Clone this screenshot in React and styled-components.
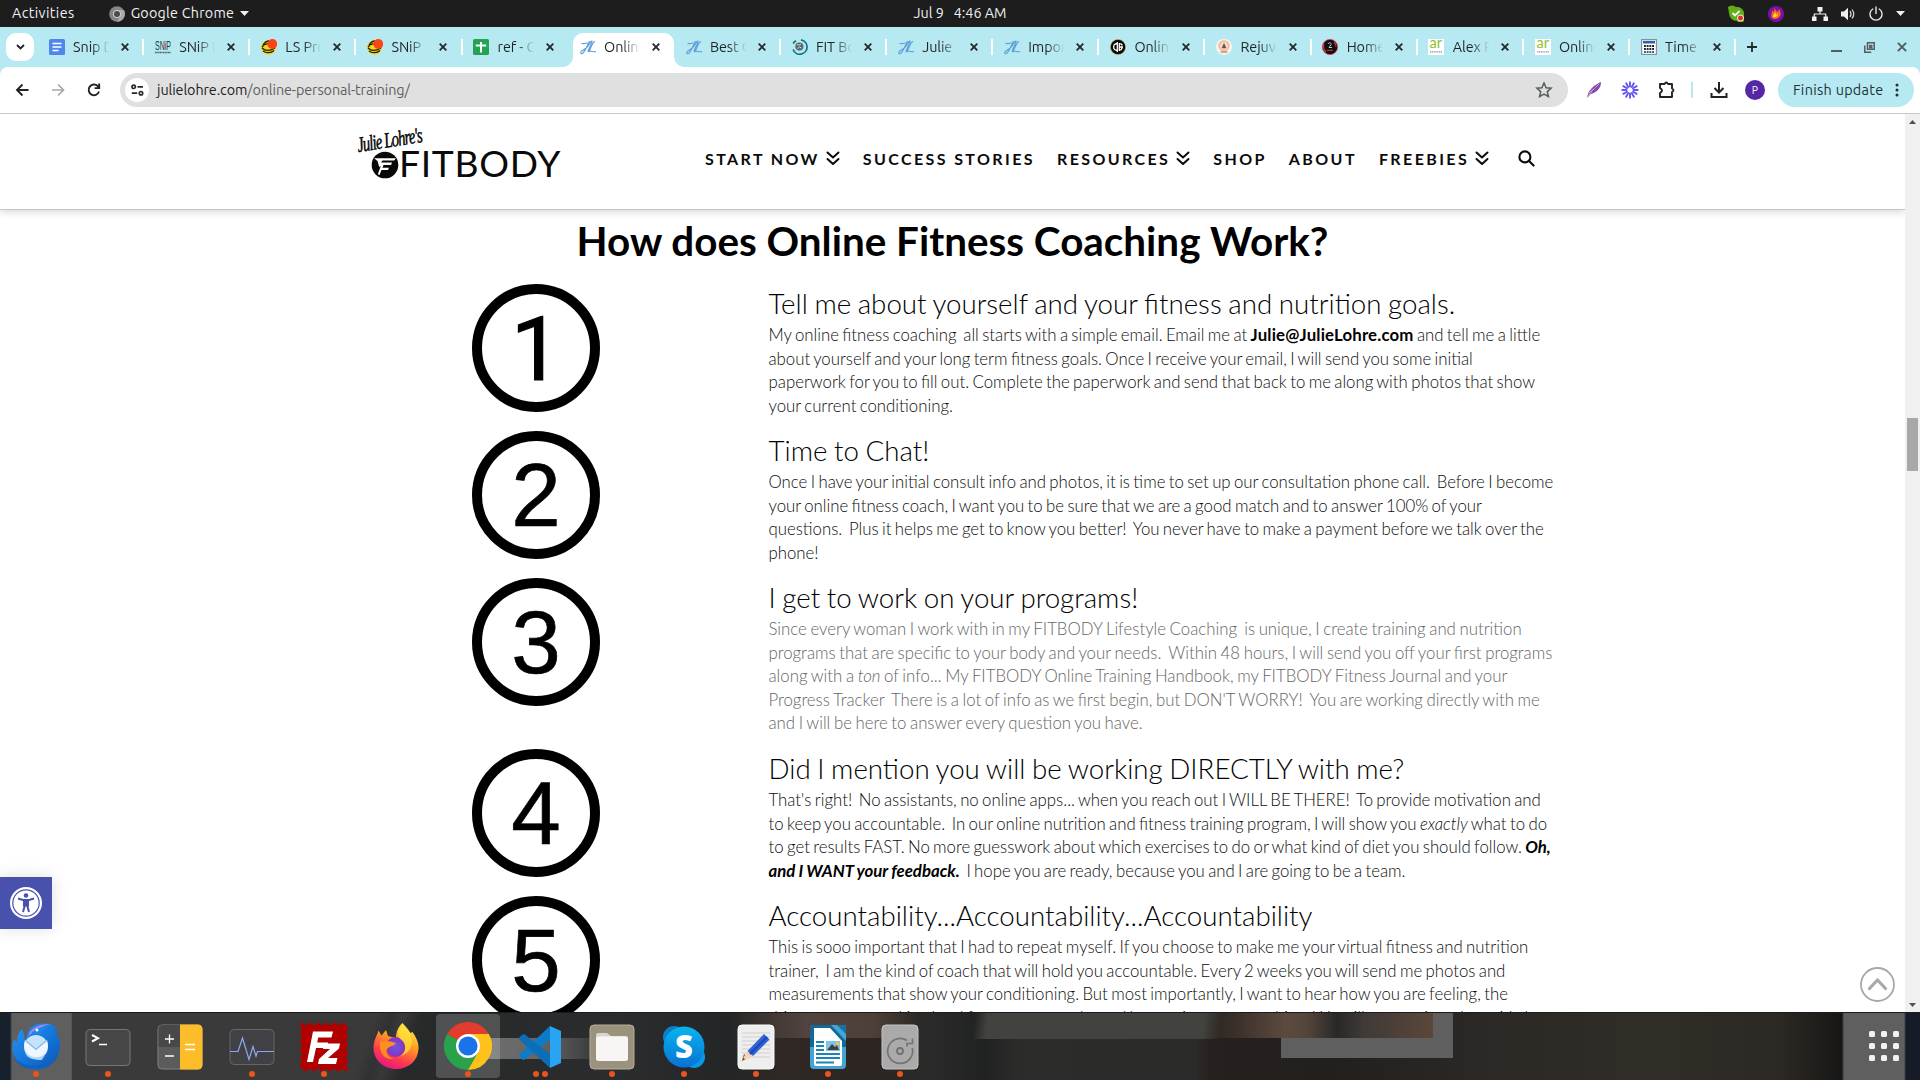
import React from "react";
import styled, { createGlobalStyle } from "styled-components";

const GlobalStyle = createGlobalStyle`
  * { box-sizing: border-box; }
  body { margin: 0; background: #fff; overflow: hidden; }
  svg { display: block; flex: none; }
`;

const uiFont = `Ubuntu, "Noto Sans", "Open Sans", sans-serif`;

const Screen = styled.div`
  width: 1920px;
  height: 1080px;
  display: flex;
  flex-direction: column;
  overflow: hidden;
  font-family: ${uiFont};
`;

/* ---------- system bar ---------- */
const SystemBar = styled.div`
  height: 27px;
  flex: none;
  background: #1d1d1d;
  color: #f0f0f0;
  display: grid;
  grid-template-columns: 1fr auto 1fr;
  align-items: center;
  font-size: 14.3px;
  line-height: 27px;
  white-space: pre;
`;
const BarText = styled.span`
  letter-spacing: ${(p) => p.$spacing}px;
`;
const BarLeft = styled.div`
  display: flex;
  align-items: center;
  padding-left: 12px;
`;
const AppMenu = styled.div`
  display: flex;
  align-items: center;
  gap: 6px;
  margin-left: 34px;
`;
const BarRight = styled.div`
  display: flex;
  align-items: center;
  justify-content: flex-end;
  padding-right: 15px;
`;
const TrayIcon = styled.div`
  margin-left: ${(p) => p.$gap}px;
`;

/* ---------- tab strip ---------- */
const TabStrip = styled.div`
  height: 40px;
  flex: none;
  background: #b6e9f1;
  display: flex;
  padding: 6px 0 0 6px;
`;
const TabSearch = styled.div`
  width: 28px;
  height: 28px;
  margin-right: 4px;
  border-radius: 10px;
  background: #fff;
  display: grid;
  place-items: center;
`;
const Tab = styled.div`
  width: ${(p) => (p.$active ? 101 : 106.14)}px;
  height: 34px;
  flex: none;
  position: relative;
  display: flex;
  align-items: center;
  margin: ${(p) => (p.$active ? "0 1px 0 4.2px" : 0)};
  padding: 0 0 6px ${(p) => (p.$active ? 7 : 10.8)}px;
  color: #1f2526;
  background: ${(p) => (p.$active ? "#fff" : "transparent")};
  border-radius: 10px 10px 0 0;
  &::before, &::after {
    content: "";
    display: ${(p) => (p.$active ? "block" : "none")};
    position: absolute;
    bottom: 0;
    width: 10px;
    height: 10px;
  }
  &::before { left: -10px; background: radial-gradient(circle at 0 0, transparent 9.5px, #fff 10px); }
  &::after { right: -10px; background: radial-gradient(circle at 100% 0, transparent 9.5px, #fff 10px); }
`;
const TabTitle = styled.div`
  width: 37px;
  margin-left: 8.3px;
  margin-right: 11px;
  overflow: hidden;
  white-space: pre;
  font-size: 14.4px;
  line-height: 22px;
  letter-spacing: -0.1px;
  -webkit-mask-image: linear-gradient(90deg, #000 50%, transparent 98%);
`;
const TabDivider = styled.div`
  width: 2px;
  height: 16px;
  margin-left: auto;
  background: ${(p) => (p.$hidden ? "transparent" : "#fff")};
`;
const NewTab = styled.div`
  padding: 8px 0 0 10px;
`;
const WindowButtons = styled.div`
  display: flex;
  height: 28px;
  align-items: center;
  gap: 22px;
  margin-left: auto;
  padding-right: 13px;
`;

/* ---------- toolbar ---------- */
const ToolbarShell = styled.div`
  height: 47px;
  flex: none;
  background: #b6e9f1;
`;
const Toolbar = styled.div`
  height: 47px;
  background: #fff;
  border-radius: 8px 8px 0 0;
  border-bottom: 1px solid #c6c9ca;
  display: flex;
  align-items: center;
  padding: 0 6px 0 13px;
`;
const NavIcons = styled.div`
  display: flex;
  gap: 18px;
  margin-right: 17px;
`;
const Omnibox = styled.div`
  width: 1448px;
  height: 34px;
  border-radius: 17px;
  background: #e0e0e0;
  display: flex;
  align-items: center;
  padding: 0 15px 0 5px;
  font-size: 14.4px;
  letter-spacing: -0.1px;
  color: #5d6061;
  b { font-weight: 400; color: #1f2122; }
`;
const SiteInfo = styled.div`
  width: 24px;
  height: 24px;
  border-radius: 50%;
  background: #fff;
  display: grid;
  place-items: center;
  margin-right: 8px;
`;
const StarSlot = styled.div`margin-left: auto;`;
const Extensions = styled.div`
  display: flex;
  align-items: center;
  gap: 18px;
  margin-left: 17px;
`;
const ToolbarDivider = styled.div`
  width: 2px;
  height: 16px;
  background: #b6e9f1;
  margin: 0 -1px 0 -2px;
`;
const Avatar = styled.div`
  width: 20px;
  height: 20px;
  border-radius: 50%;
  background: #5627a5;
  color: #fff;
  font-size: 10.5px;
  line-height: 20px;
  text-align: center;
  margin-left: -1px;
`;
const UpdateButton = styled.div`
  width: 136px;
  height: 34px;
  border-radius: 17px;
  margin-left: auto;
  background: #b6e9f1;
  color: #1c3438;
  display: flex;
  align-items: center;
  justify-content: space-between;
  padding: 0 15px;
  font-size: 14.4px;
  letter-spacing: 0.3px;
  white-space: nowrap;
`;

/* ---------- page ---------- */
const Viewport = styled.div`
  height: 898px;
  flex: none;
  display: flex;
  overflow: hidden;
  background: #fff;
  position: relative;
`;
const Page = styled.div`
  flex: 1;
  font-family: Lato, sans-serif;
  overflow: hidden;
`;
const Header = styled.header`
  height: 96px;
  border-bottom: 1px solid #c4c6c6;
  box-shadow: 0 2px 8px rgba(0, 0, 0, 0.16);
  display: flex;
  padding: 14px 0 0 357px;
`;
const Logo = styled.div`
  width: 205px;
  height: 54px;
  position: relative;
`;
const LogoScript = styled.span`
  position: absolute;
  left: 0;
  top: 6px;
  font: italic 400 18px/22px "Liberation Serif", serif;
  letter-spacing: -1px;
  -webkit-text-stroke: 0.4px #000;
  transform-origin: 0 50%;
  transform: rotate(-9deg) scale(0.82, 1.2);
  white-space: nowrap;
`;
const LogoMark = styled.div`
  position: absolute;
  left: 14px;
  top: 23px;
`;
const LogoWord = styled.span`
  position: absolute;
  left: 42px;
  top: 11px;
  font: 400 37.2px/48px Lato, sans-serif;
  letter-spacing: 0.7px;
  color: #0a0a0a;
  white-space: nowrap;
`;
const Nav = styled.nav`
  height: 38px;
  display: flex;
  align-items: center;
  gap: 22px;
  margin: 11px 0 0 143px;
  font-size: 16px;
  font-weight: 700;
  letter-spacing: 2.4px;
  color: #0b0b0b;
  white-space: nowrap;
`;
const NavItem = styled.a`
  display: flex;
  align-items: center;
  gap: 6px;
  margin-right: ${(p) => (p.$menu ? 1 : 0)}px;
`;
const SearchSlot = styled.div`margin-left: 6px;`;
const Title = styled.h2`
  margin: 6px 0 0;
  text-align: center;
  font-size: 40.4px;
  line-height: 50px;
  font-weight: 700;
  color: #000;
`;
const Steps = styled.div`
  padding: 18px 0 0 357px;
  display: flex;
  flex-direction: column;
  gap: 19px;
`;
const Step = styled.section`
  height: ${(p) => 128 + (p.$extra || 0)}px;
  display: grid;
  grid-template-columns: 358px 800px;
  column-gap: 53.5px;
`;
const Number = styled.div`
  width: 128px;
  height: 128px;
  justify-self: center;
  border: 10px solid #000;
  border-radius: 50%;
  padding-top: ${(p) => (p.$footless ? 2 : 0)}px;
  font: 89px/108px ${(p) => (p.$footless ? "Roboto" : `"Liberation Sans"`)}, Arial, sans-serif;
  color: #000;
  -webkit-text-stroke: ${(p) => (p.$footless ? 1.2 : 0.7)}px #000;
  text-align: center;
`;
const StepTitle = styled.h3`
  margin: 2px 0 0;
  font-size: 27.7px;
  line-height: 36px;
  font-weight: 300;
  color: #000;
  white-space: nowrap;
  word-spacing: -0.9px;
`;
const StepText = styled.p`
  margin: 1px 0 0;
  font-size: 16.8px;
  line-height: 23.6px;
  font-weight: 300;
  word-spacing: ${(p) => (p.$muted ? -0.95 : -1.2)}px;
  white-space: pre;
  color: ${(p) => (p.$muted ? "#666" : "#0d0d0d")};
  b { font-weight: 700; color: #000; letter-spacing: 0.17px; }
  b i { letter-spacing: 0; word-spacing: -0.5px; }
`;
const Scrollbar = styled.div`
  width: 15px;
  background: #f0f0f0;
  display: flex;
  flex-direction: column;
  align-items: center;
  justify-content: space-between;
  padding: 6px 0 5px;
`;
const Thumb = styled.div`
  width: 11px;
  height: 53px;
  background: #a8a8a8;
  margin: 0 0 238px;
`;
const Accessibility = styled.div`
  position: absolute;
  left: 0;
  top: 763px;
  width: 52px;
  height: 52px;
  background: #4852ad;
  box-shadow: 0 0 16px rgba(0, 0, 0, 0.12);
  display: grid;
  place-items: center;
`;
const BackToTop = styled.div`
  position: absolute;
  left: 1860px;
  top: 853px;
`;

/* ---------- dock ---------- */
const Dock = styled.div`
  height: 68px;
  flex: none;
  display: flex;
  align-items: stretch;
  border-top: 1px solid #1b1b1b;
  overflow: hidden;
  background:
    linear-gradient(#5f5f5f, #5f5f5f) 1281px 25px / 172px 20px no-repeat,
    linear-gradient(#5f5f5f, #5f5f5f) 1433px 0 / 20px 45px no-repeat,
    linear-gradient(90deg, rgba(92,74,62,0), #5c4a3e 35%, #54453b 45%, #292827 58%, #403a38 70%, #5a4739) 1205px 0 / 228px 25px no-repeat,
    linear-gradient(97deg, rgba(66,67,62,0) 4%, #42433e 9%, #42433e 93%, rgba(66,67,62,0)) 965px 0 / 255px 26px no-repeat,
    linear-gradient(90deg, rgba(85,70,62,0), #51443f 40%, #4d4038 75%, rgba(80,66,58,0)) 730px 0 / 190px 25px no-repeat,
    linear-gradient(90deg, #707070 0, #666 50%, rgba(90,90,90,0)) 464px 25px / 150px 21px no-repeat,
    linear-gradient(110deg, #3a3a3a 78%, #303132 82%, #383838 85%, #27292a 90%) 72px 0 / 366px 68px no-repeat,
    linear-gradient(90deg, #17212b 10px, #5f5f5f 12px, #5f5f5f 71px, #3a3a3a 73px, #27292a 438px, #2b2c2d 620px, #232526 730px, #2f2825 780px, #2c2522 870px, #2a2a29 930px, #202222 985px, #2c2c2a 1020px, #2b2b2a 1195px, #26211e 1210px, #231f1c 1330px, #2c2926 1500px, #312d27 1650px, #2c2924 1780px, #181615 1842px, #5f5f5f 1844px, #5f5f5f 1904px, #161b29 1906px);
`;
const DockItem = styled.div`
  width: 72px;
  display: flex;
  flex-direction: column;
  align-items: center;
  padding-top: 1px;
`;
const DockTile = styled.div`
  width: 64px;
  height: 58px;
  margin-bottom: -1px;
  display: grid;
  place-items: center;
  padding-top: 7px;
  border-radius: 4px;
`;
const DockHighlight = styled(DockTile)`
  height: 64px;
  margin-bottom: -7px;
  padding: 0;
  background: rgba(255, 255, 255, 0.19);
`;
const Dots = styled.div`
  display: flex;
  gap: 3px;
  i { width: 6px; height: 6px; border-radius: 50%; background: #e95420; }
`;
const AppsGrid = styled.div`
  margin: 17px 20px 0 auto;
`;

/* ---------- favicons ---------- */
const Fav = ({ type }) => {
  const p = { width: 16, height: 16, viewBox: "0 0 16 16", fill: "none" };
  switch (type) {
    case "doc":
      return <svg {...p}><rect width="16" height="16" rx="1.6" fill="#4f86ec" /><path d="M3.5 4.5h9M3.5 8h9M3.5 11.5h6" stroke="#fff" strokeWidth="1.6" /></svg>;
    case "snip":
      return (
        <svg {...p}>
          <text x="0" y="10.5" fontFamily="Liberation Sans" fontWeight="400" fontSize="13.5" textLength="16" lengthAdjust="spacingAndGlyphs" fill="#26383b">SNiP</text>
          <path d="M10 3v7" stroke="#e4645a" strokeWidth=".9" /><path d="M0 13.5h16" stroke="#4b6366" strokeWidth="1.6" strokeDasharray="1.2 .4" />
        </svg>
      );
    case "burger":
      return <svg {...p}><circle cx="7.5" cy="8.6" r="7.4" fill="#f4d51e" /><path d="M1 8c3-4 7-4 8-1M1 9c3 3 8 3 13 0M2 12c3 2.3 8 2.3 11-.5M2 6c2-3 4-4 6-4" stroke="#22220f" strokeWidth="1.3" /><circle cx="11.3" cy="5" r="4.9" fill="#fa4616" /></svg>;
    case "sheet":
      return <svg {...p}><rect width="16" height="16" rx="1.6" fill="#23a455" /><path d="M2.8 6.5h10.4M8 3v10.6" stroke="#fff" strokeWidth="2" /></svg>;
    case "jl":
      return <svg {...p}><path d="M1.500 4.500c2 .4 4 0 6-.8M9.500 2C7.500 6 5 13 2.500 14.500.3 15.500 0 12.800 3 11.300c3-1.500 5-3.500 7-7.300 1-2 2.800-2.800 1.800-.5L7.800 12.500M15 2.300C12.500 3.500 11 8.500 9 12.600c2.500-1.200 4 .7 7 0" stroke="#5d9fd8" strokeWidth="1.1" /></svg>;
    case "fit":
      return <svg {...p}><path d="M9 .9a7.2 7.2 0 1 1-7.900 9.600M1.200 4.500A7 7 0 0 1 4 1.700" stroke="#087481" strokeWidth="1.700" /><circle cx="7.400" cy="7.600" r="4.100" fill="#5c6a6e" /><path d="M5 6c2-1 2 1 4-1M5.500 9.500l2-1.500 2 1" stroke="#cdd7da" /></svg>;
    case "df":
      return <svg {...p}><circle cx="8" cy="8" r="7.600" fill="#080808" stroke="#c9b44b" strokeWidth=".6" /><path d="M7.300 3v10M6.800 4.800C2.600 4.300 2.600 11.700 6.800 11.200M9.300 4v8M9 4.700c2 0 3 .8 3.200 1.800M9 8h4M9 11.300c2 0 3-1 3.200-3" stroke="#fff" strokeWidth="1.300" /></svg>;
    case "reju":
      return <svg {...p}><circle cx="8" cy="8" r="8" fill="#f7f4ef" /><circle cx="8" cy="6.800" r="4.800" fill="#fbd9bf" stroke="#f5b58c" strokeWidth="1.700" /><path d="M6 9l2-4.600L10 9z" fill="#55565a" stroke="#55565a" strokeWidth=".5" /><path d="M4.500 13h7" stroke="#b99a82" strokeWidth="1.500" /></svg>;
    case "home":
      return <svg {...p}><circle cx="8" cy="8" r="7.600" fill="#101014" stroke="#d8384b" strokeWidth=".8" /><path d="M6 5c1.500-2.500 4-1 2.800 1L7 8.500h3" stroke="#c2c5ca" strokeWidth="1" /><path d="M5 11.300h6" stroke="#d8384b" strokeWidth="1" /><path d="M2 5c-1 3 0 6 2 8M12 3c2 2 2 3 2 5" stroke="#d8384b" strokeWidth="1.100" /></svg>;
    case "ar":
      return <svg {...p}><rect width="16" height="16" fill="#fff" /><text x="1.500" y="9.400" fontFamily="Lato" fontSize="14.500" fontWeight="400" fill="#8ebf32">ar</text><path d="M2 12.800h12" stroke="#999" strokeWidth="1.300" strokeDasharray="1.300 .5" /></svg>;
    default:
      return <svg {...p}><rect x=".6" y=".6" width="14.800" height="14.800" fill="#fff" stroke="#8a9095" strokeWidth="1.200" /><path d="M2 3.200h12" stroke="#2c62a8" strokeWidth="2.600" /><path d="M3 7h10M3 10h10" stroke="#222" strokeWidth="1.900" strokeDasharray="1.900 .8" /><path d="M3 13h10" stroke="#2c62a8" strokeWidth="1.900" strokeDasharray="1.900 .8" /></svg>;
  }
};

const Cross = ({ size = 8, color = "#242829", w = 1.8 }) => (
  <svg width={size} height={size} viewBox="0 0 8 8"><path d="M.7.7l6.6 6.6M7.3.7L.7 7.3" stroke={color} strokeWidth={w} /></svg>
);

const tabs = [
  ["doc", "Snip D"], ["snip", "SNiP L"], ["burger", "LS Pro"], ["burger", "SNiP  "], ["sheet", "ref - G"],
  ["jl", "Online"], ["jl", "Best O"], ["fit", "FIT Bo"], ["jl", "Julie  "], ["jl", "Impor"],
  ["df", "Online"], ["reju", "Rejuve"], ["home", "Home"], ["ar", "Alex R"], ["ar", "Online"], ["calc", "Time  "],
];
const ACTIVE = 5;

const Chevrons = () => (
  <svg width="14" height="15" viewBox="0 0 14 15" fill="none" stroke="#0b0b0b" strokeWidth="2" strokeLinecap="round" strokeLinejoin="round">
    <path d="M1.500 1.500L7 6.500l5.500-5M1.500 8L7 13l5.500-5" />
  </svg>
);

const navItems = [
  ["START NOW", true], ["SUCCESS STORIES"], ["RESOURCES", true], ["SHOP"], ["ABOUT"], ["FREEBIES", true],
];

const steps = [
  {
    title: "Tell me about yourself and your fitness and nutrition goals.",
    text: <>{"My online fitness coaching  all starts with a simple email. Email me at "}<b>Julie@JulieLohre.com</b>{" and tell me a little\nabout yourself and your long term fitness goals. Once I receive your email, I will send you some initial\npaperwork for you to fill out. Complete the paperwork and send that back to me along with photos that show\nyour current conditioning."}</>,
  },
  {
    title: "Time to Chat!",
    text: "Once I have your initial consult info and photos, it is time to set up our consultation phone call.  Before I become\nyour online fitness coach, I want you to be sure that we are a good match and to answer 100% of your\nquestions.  Plus it helps me get to know you better!  You never have to make a payment before we talk over the\nphone!",
  },
  {
    title: "I get to work on your programs!",
    muted: true,
    extra: 24,
    text: <>{"Since every woman I work with in my FITBODY Lifestyle Coaching  is unique, I create training and nutrition\nprograms that are specific to your body and your needs.  Within 48 hours, I will send you off your first programs\nalong with a "}<i>ton</i>{" of info... My FITBODY Online Training Handbook, my FITBODY Fitness Journal and your\nProgress Tracker  There is a lot of info as we first begin, but DON'T WORRY!  You are working directly with me\nand I will be here to answer every question you have."}</>,
  },
  {
    title: "Did I mention you will be working DIRECTLY with me?",
    text: <>{"That's right!  No assistants, no online apps... when you reach out I WILL BE THERE!  To provide motivation and\nto keep you accountable.  In our online nutrition and fitness training program, I will show you "}<i>exactly</i>{" what to do\nto get results FAST. No more guesswork about which exercises to do or what kind of diet you should follow. "}<b><i>{"Oh,\nand I WANT your feedback."}</i></b>{"  I hope you are ready, because you and I are going to be a team."}</>,
  },
  {
    title: "Accountability...Accountability...Accountability",
    text: "This is sooo important that I had to repeat myself. If you choose to make me your virtual fitness and nutrition\ntrainer,  I am the kind of coach that will hold you accountable. Every 2 weeks you will send me photos and\nmeasurements that show your conditioning. But most importantly, I want to hear how you are feeling, the\nthings you are working hard for, your strengths and how to improve anything. We will go over it and provide h",
  },
];

/* ---------- dock icons ---------- */
const I = (props) => <svg width="48" height="48" viewBox="0 0 48 48" fill="none" {...props} />;

const Thunderbird = () => (
  <I>
    <defs><linearGradient id="tb" x1="0" y1="0" x2="1" y2="1"><stop stopColor="#2c93ef" /><stop offset=".5" stopColor="#1477db" /><stop offset="1" stopColor="#0c55b3" /></linearGradient></defs>
    <path d="M10 6C6 10 5 14 5 19l-3-3c-3 8-2 17 4 23 8 8 22 10 31 4 8-5 11-13 11-22 0-4-1-7-4-10 1-1 2-2 2-3l-4-1 3-3C36-1 20-2 16 9l-3 11C13 14 12 10 10 6z" fill="url(#tb)" />
    <path d="M16 13C20 3 31-.5 42 2c-9-1-13 2-17 6-3 2-5 2-9 5z" fill="#a78bf6" />
    <path d="M19 11c4-6 11-8 19-7-5 1-8 4-10 7z" fill="#1e84e4" />
    <circle cx="25" cy="7" r="1.500" fill="#fff" />
    <circle cx="24" cy="24" r="12" fill="#c4e2fb" />
    <path d="M13 17l11 9.500L35 17c3 9-2 17-11 17S10 26 13 17z" fill="#eef7ff" />
    <path d="M13.500 17.500l10.500 9 10.500-9" stroke="#84b8e8" strokeWidth="1.300" />
    <path d="M13 30c5 5 11 6 20 3-6 5 0 5-3 4-8 0-14-1-17-7z" fill="#a7d6fb" />
    <path d="M1 32c7 12 24 13 38 6-10 11-32 12-38-6z" fill="#0d5fc0" opacity=".7" />
  </I>
);
const Terminal = () => (
  <I>
    <rect x="2" y="6.500" width="44" height="36" rx="4" fill="#464646" stroke="#777" />
    <path d="M8 12l6 3.200L8 18.500" stroke="#fff" strokeWidth="2" /><path d="M15 21.500h8" stroke="#fff" strokeWidth="1.500" />
  </I>
);
const Calculator = () => (
  <I>
    <rect x="2" y="2" width="44" height="44" rx="4" fill="#5b5b5b" stroke="#828282" />
    <path d="M2.500 24V6a4 4 0 0 1 4-4H24v22z" fill="#484848" />
    <path d="M24 1.500h18a4.500 4.500 0 0 1 4.500 4.500v36a4.500 4.500 0 0 1-4.500 4.500H24z" fill="#fdbd2b" />
    <path d="M9 16h9M13.500 11.500v9M9 33h9M29 21.500h10M29 26.500h10" stroke="#fff" strokeWidth="1.300" />
  </I>
);
const Monitor = () => (
  <I>
    <rect x="2" y="6.500" width="44" height="35" rx="4" fill="#414145" stroke="#666" />
    <path d="M2 28.500h8L14.500 15 21 36.500l4-13L28 33l1.500-4.500H46" stroke="#8ea8ef" strokeWidth="1.200" />
  </I>
);
const FileZilla = () => (
  <I>
    <rect x="2" y="2" width="44" height="44" fill="#b10000" />
    <rect x="1.700" y="1.700" width="44.600" height="44.600" stroke="#b10000" strokeWidth="3.400" strokeDasharray="4.600 3.500" strokeDashoffset="2.300" />
    <path d="M13 8.500h20l-1.500 6H18.200l-1 5h11l-1.300 5.500H16L13 39H7z" fill="#fff" />
    <path d="M24 20.500h16l-1 5-11 9.500h9.500l-1.500 6H18l1-5L30 26h-7z" fill="#fff" />
  </I>
);
const Firefox = () => (
  <I>
    <defs>
      <linearGradient id="ff" x1=".8" y1="0" x2=".3" y2="1"><stop stopColor="#fff44f" /><stop offset=".4" stopColor="#ff9a23" /><stop offset=".75" stopColor="#ff3750" /><stop offset="1" stopColor="#e31587" /></linearGradient>
      <radialGradient id="fp"><stop stopColor="#6b57e8" /><stop offset="1" stopColor="#8b32b4" /></radialGradient>
    </defs>
    <path d="M30.500 0c2.500 3 5.500 5.500 8 10l2-1c4 6 6.500 11 6 17-.7 12-10 20-22.500 20S1.500 37 1.500 25C1.500 17 5 13 6.500 7.500l3 5L14 7l2 6 8 2c0-6 2-11 6.500-15z" fill="url(#ff)" />
    <circle cx="23.500" cy="24" r="10" fill="url(#fp)" />
    <path d="M8 19c5-2 10-1 16 1-1 3-7 3-9 6-2 4 2 9 7 10-9 1-15-5-14-17z" fill="#ff8f1c" />
    <path d="M30.500 1c-5 6-6 12-1 16 5 4 5 12-1 16 11-3 14-14 9-23z" fill="#ffe13a" opacity=".75" />
  </I>
);
const Chrome = () => (
  <I>
    <path d="M24 24L3.200 12A24 24 0 0 1 44.800 12H24z" fill="#e33b2e" />
    <path d="M24 24l10.400 6L24 48A24 24 0 0 1 3.200 12z" fill="#2aa24c" />
    <path d="M24 12h20.800A24 24 0 0 1 24 48l10.400-18z" fill="#fdc31b" />
    <circle cx="24" cy="24" r="12" fill="#fff" /><circle cx="24" cy="24" r="9.600" fill="#1a73e8" />
  </I>
);
const VSCode = () => (
  <I>
    <path d="M34 3L3.500 31.500c-.7.700-.7 1.600 0 2.300l3 2.700c.6.500 1.500.5 2.200 0L34 17z" fill="#0c7bc8" />
    <path d="M34 45L3.500 16.500c-.7-.7-.7-1.600 0-2.300l3-2.700c.6-.5 1.500-.5 2.200 0L34 31z" fill="#0b6fb7" />
    <path d="M34 3l11 5v32l-11 5z" fill="#29a4f2" />
  </I>
);
const Files = () => (
  <I>
    <rect x="2" y="2" width="44" height="44" rx="4" fill="#9a927d" stroke="#b6ae9a" />
    <path d="M8 12a2 2 0 0 1 2-2h9l4 3h15a2 2 0 0 1 2 2v6H8z" fill="#dad5ca" />
    <rect x="8" y="13.500" width="32" height="24.500" rx="2.500" fill="#f7f6f4" />
  </I>
);
const Skype = () => (
  <I>
    <defs><linearGradient id="sk" x1="0" y1="0" x2="0" y2="1"><stop stopColor="#08b5ef" /><stop offset="1" stopColor="#0872d4" /></linearGradient></defs>
    <circle cx="14" cy="14" r="11" fill="#0b80c8" /><circle cx="34" cy="34" r="11" fill="#0b98e5" /><circle cx="24" cy="24" r="20.500" fill="url(#sk)" />
    <text x="24" y="34.500" textAnchor="middle" fontFamily="Open Sans, sans-serif" fontWeight="800" fontSize="31" fill="#fff">S</text>
  </I>
);
const TextEditor = () => (
  <I>
    <rect x="6" y="2" width="36" height="44" rx="4" fill="#eeeeee" stroke="#fafafa" />
    <path d="M10 10h28M10 14h28M10 18h28M10 22h28M10 26h28M10 30h28M10 34h28" stroke="#cfcfcf" />
    <path d="M10 38l2-7 4 4z" fill="#574c43" /><path d="M11.200 34.500L16 28l5 5-7.500 4z" fill="#f6d4ae" />
    <path d="M15.500 28L32 11l5.500 5.500L21 33z" fill="#2f62d9" /><path d="M18 31l17-17" stroke="#1d47b5" strokeWidth="2" />
  </I>
);
const Writer = () => (
  <I>
    <rect x="6" y="2" width="36" height="44" rx="4" fill="#43a5d6" /><path d="M6 24V6a4 4 0 0 1 4-4h17l15 16v6z" fill="#126896" />
    <path d="M10 5h16l12 13v23a2 2 0 0 1-2 2H12a2 2 0 0 1-2-2z" fill="#fff" /><path d="M33 2h9v9z" fill="#19719f" />
    <path d="M12 19h8M12 23h8M12 27h8M12 31h24M12 35h24M12 39.500h18" stroke="#1c83b8" strokeWidth="2" />
    <rect x="22" y="18" width="14" height="10" fill="#7bc6e8" /><path d="M23 27l5-6 3 3 2-2 2 5z" fill="#404040" /><circle cx="33.500" cy="20.500" r="1.800" fill="#fdc12e" />
  </I>
);
const Disks = () => (
  <I>
    <rect x="6" y="2" width="36" height="44" rx="4" fill="#aaa" stroke="#c4c4c4" />
    <circle cx="24" cy="28" r="3" stroke="#707070" strokeWidth="1.800" />
    <path d="M31 17.500A12.500 12.500 0 1 0 36.300 25M31 23.500v-3h5.500v-5" stroke="#747474" strokeWidth="1.700" />
  </I>
);

const dock = [
  [Thunderbird, 1], [Terminal, 1], [Calculator, 0], [Monitor, 1], [FileZilla, 1], [Firefox, 0], [Chrome, 1],
  [VSCode, 2], [Files, 1], [Skype, 1], [TextEditor, 1], [Writer, 1], [Disks, 1],
];

export default function App() {
  return (
    <Screen>
      <GlobalStyle />
      <SystemBar>
        <BarLeft>
          <BarText $spacing={0.4}>Activities</BarText>
          <AppMenu>
            <svg width="16" height="16" viewBox="0 0 16 16"><circle cx="8" cy="8" r="7.800" fill="#858585" /><path d="M8 4h7a8 8 0 0 1-7 11.800l3.500-6z" fill="#aaa" /><circle cx="8" cy="8" r="4" fill="#ccc" /><circle cx="8" cy="8" r="3" fill="#4c4c4c" /></svg>
            <BarText $spacing={0.25}>Google Chrome</BarText>
            <svg width="9" height="5" viewBox="0 0 9 5"><path d="M0 0h9L4.500 5z" fill="#f0f0f0" /></svg>
          </AppMenu>
        </BarLeft>
        <BarText $spacing={0.02}>{"Jul 9   4:46 AM"}</BarText>
        <BarRight>
          <TrayIcon><svg width="16" height="17" viewBox="0 0 16 17"><path d="M0 2q4-3 8 0a7 7 0 0 1 8 8 4.500 4.500 0 0 1-7 6A8 8 0 0 1 1 8z" fill="#63ad18" /><path d="M4.500 8l2.500 2.500L11.500 6" stroke="#fff" strokeWidth="1.800" fill="none" /><circle cx="12.500" cy="13" r="3" fill="#e12b22" stroke="#fff" strokeWidth=".9" /></svg></TrayIcon>
          <TrayIcon $gap={24}><svg width="16" height="16" viewBox="0 0 16 16"><circle cx="8" cy="8" r="8" fill="#7b12a7" /><path d="M4 12c-2-4 1-5 0-8l2 2 .5-4L9 6l3-3c-1 3 2 4 0 7-2 3-5 4-8 2z" fill="#fb641e" /><path d="M5 11c0-3 2-3 2-5l1.500 3L10 7c0 3-2 5-5 4z" fill="#ffdb3b" /></svg></TrayIcon>
          <TrayIcon $gap={28}><svg width="16" height="14" viewBox="0 0 16 14" fill="#f0f0f0"><rect x="5.500" width="5" height="4.500" /><rect y="9.500" width="4.500" height="4.500" /><rect x="11.500" y="9.500" width="4.500" height="4.500" /><path d="M8 4v3M2.300 10V7h11.400v3" stroke="#f0f0f0" fill="none" strokeWidth="1.200" /></svg></TrayIcon>
          <TrayIcon $gap={13}><svg width="16" height="14" viewBox="0 0 16 14"><path d="M0 4.500h3L7 .8v12.400L3 9.500H0z" fill="#f0f0f0" /><path d="M9 4q2 3 0 6M11 2.500q3.500 4.500 0 9" stroke="#ddd" fill="none" strokeWidth="1.200" /></svg></TrayIcon>
          <TrayIcon $gap={12}><svg width="14" height="15" viewBox="0 0 14 15" fill="none" stroke="#e8e8e8" strokeWidth="1.400" strokeLinecap="round"><path d="M7 1v6.500M3.800 3A6 6 0 1 0 10.200 3" /></svg></TrayIcon>
          <TrayIcon $gap={13}><svg width="9" height="5" viewBox="0 0 9 5"><path d="M0 0h9L4.500 5z" fill="#f0f0f0" /></svg></TrayIcon>
        </BarRight>
      </SystemBar>

      <TabStrip>
        <TabSearch><svg width="9" height="6" viewBox="0 0 9 6"><path d="M1 1l3.500 3.500L8 1" stroke="#202425" strokeWidth="1.800" fill="none" /></svg></TabSearch>
        {tabs.map(([icon, label], i) => (
          <Tab key={i} $active={i === ACTIVE}>
            <Fav type={icon} />
            <TabTitle>{label}</TabTitle>
            <Cross />
            <TabDivider $hidden={i === ACTIVE || i === ACTIVE - 1} />
          </Tab>
        ))}
        <NewTab><svg width="12" height="12" viewBox="0 0 12 12"><path d="M6 1v10M1 6h10" stroke="#242829" strokeWidth="1.800" /></svg></NewTab>
        <WindowButtons>
          <svg width="11" height="10" viewBox="0 0 11 10"><path d="M0 9h11" stroke="#535c5e" strokeWidth="2" /></svg>
          <svg width="11" height="11" viewBox="0 0 11 11" fill="none" stroke="#535c5e" strokeWidth="1.500"><path d="M3.500.8h6.700v6.400H3.500zM.8 3.500v6.700h6.400M5.800 3.600v1.800h1.900V3.600z" /></svg>
          <Cross size={10} color="#535c5e" w={1.500} />
        </WindowButtons>
      </TabStrip>

      <ToolbarShell>
        <Toolbar>
          <NavIcons>
            <svg width="18" height="18" viewBox="0 0 18 18" fill="none" stroke="#202425" strokeWidth="1.900"><path d="M15.500 9H4.500M9.500 3.500L4 9l5.500 5.500" /></svg>
            <svg width="18" height="18" viewBox="0 0 18 18" fill="none" stroke="#a5a8a9" strokeWidth="1.700"><path d="M3 9h11M9 3.500L14.500 9 9 14.500" /></svg>
            <svg width="18" height="18" viewBox="0 0 18 18" fill="none" stroke="#202425" strokeWidth="1.900"><path d="M14 10.500A5.300 5.300 0 1 1 12.800 5.200L14 6.800M14.200 2.500v4.600H9.600" /></svg>
          </NavIcons>
          <Omnibox>
            <SiteInfo><svg width="13" height="12" viewBox="0 0 13 12" fill="none" stroke="#26292a" strokeWidth="1.700"><circle cx="2.700" cy="2.800" r="1.700" /><path d="M6.500 2.800H12M.8 9.200h5.400" /><circle cx="10" cy="9.200" r="1.700" /></svg></SiteInfo>
            <span><b>julielohre.com</b>/online-personal-training/</span>
            <StarSlot><svg width="18" height="18" viewBox="0 0 18 18" fill="none" stroke="#555b5d" strokeWidth="1.500"><path d="M9 2l2.100 4.700 5 .5-3.800 3.400 1.100 5L9 13l-4.400 2.600 1.100-5L1.900 7.200l5-.5z" /></svg></StarSlot>
          </Omnibox>
          <Extensions>
            <svg width="18" height="18" viewBox="0 0 18 18"><path d="M2 17C3 9 9 4 16 1c0 7-5 11-11 12z" fill="#8747b5" /><path d="M2 17C6 11 10 7 14 3M4 12l5-4" stroke="#e6c5ee" strokeWidth=".8" /></svg>
            <svg width="18" height="18" viewBox="0 0 18 18" stroke="#6454f0" strokeWidth="1.900" strokeLinecap="round">
              {[0, 30, 60, 90, 120, 150, 180, 210, 240, 270, 300, 330].map((a) => <path key={a} d="M9 5.500V1.300" transform={`rotate(${a} 9 9)`} />)}
            </svg>
            <svg width="18" height="18" viewBox="0 0 18 18" fill="none" stroke="#202425" strokeWidth="1.900"><path d="M3 3h4.500q1.800-3 3.600 0H15v4.500q3 1.800 0 3.600V16H3v-4q4-2.500 0-5z" strokeLinejoin="round" /></svg>
            <ToolbarDivider />
            <svg width="18" height="18" viewBox="0 0 18 18" fill="none" stroke="#202425" strokeWidth="2"><path d="M9 1v10M4.500 7L9 11.500 13.500 7M1.500 12v4h15v-4" /></svg>
            <Avatar>P</Avatar>
          </Extensions>
          <UpdateButton>
            <span>Finish update</span>
            <svg width="4" height="14" viewBox="0 0 4 14" fill="#1c3438"><circle cx="2" cy="2" r="1.500" /><circle cx="2" cy="7" r="1.500" /><circle cx="2" cy="12" r="1.500" /></svg>
          </UpdateButton>
        </Toolbar>
      </ToolbarShell>

      <Viewport>
        <Page>
          <Header>
            <Logo>
              <LogoScript>Julie Lohre's</LogoScript>
              <LogoMark>
                <svg width="28" height="28" viewBox="0 0 28 28"><circle cx="14" cy="14" r="13.300" fill="#080808" /><path d="M3 7.200h22l-1.800 2.200H11.500l-1.500 2.200h11L20 14h-7.500l-1 2.800H18l-1 2.300h-6.500L8.500 24l-1.700-.8 3-8.200L8.200 16 6.500 10z" fill="#fff" /></svg>
              </LogoMark>
              <LogoWord>FITBODY</LogoWord>
            </Logo>
            <Nav>
              {navItems.map(([label, menu]) => (
                <NavItem key={label} $menu={menu}>{label}{menu && <Chevrons />}</NavItem>
              ))}
              <SearchSlot><svg width="17" height="17" viewBox="0 0 17 17" fill="none" stroke="#0b0b0b" strokeWidth="2.100" strokeLinecap="round"><circle cx="6.900" cy="6.900" r="5.500" /><path d="M11 11l4.600 4.600" /></svg></SearchSlot>
            </Nav>
          </Header>
          <Title>How does Online Fitness Coaching Work?</Title>
          <Steps>
            {steps.map((s, i) => (
              <Step key={s.title} $extra={s.extra}>
                <Number $footless={i === 0}>{i + 1}</Number>
                <div>
                  <StepTitle>{s.title}</StepTitle>
                  <StepText $muted={s.muted}>{s.text}</StepText>
                </div>
              </Step>
            ))}
          </Steps>
        </Page>
        <Scrollbar>
          <svg width="7" height="4" viewBox="0 0 7 4"><path d="M3.500 0L7 4H0z" fill="#505050" /></svg>
          <Thumb />
          <svg width="7" height="4" viewBox="0 0 7 4"><path d="M0 0h7L3.500 4z" fill="#505050" /></svg>
        </Scrollbar>
        <Accessibility>
          <svg width="32" height="32" viewBox="0 0 32 32"><circle cx="16" cy="16" r="16" fill="#fff" /><circle cx="16" cy="16" r="13.200" stroke="#4852ad" strokeWidth="1.200" fill="none" /><circle cx="16" cy="8.500" r="2.300" fill="#4852ad" /><path d="M8 11.500l5 1.500h6l5-1.500M14.500 13v6.500l-1.500 5.500M17.500 13v6.500L19 25" stroke="#4852ad" strokeWidth="2" fill="none" /><path d="M13 12.500h6v7h-6z" fill="#4852ad" /></svg>
        </Accessibility>
        <BackToTop>
          <svg width="35" height="35" viewBox="0 0 35 35" fill="none" stroke="#a8a8a8"><circle cx="17.500" cy="17.500" r="16.500" strokeWidth="1.800" /><path d="M9.500 21.500l8-8.500 8 8.500" strokeWidth="3.200" strokeLinecap="round" strokeLinejoin="miter" /></svg>
        </BackToTop>
      </Viewport>

      <Dock>
        {dock.map(([Icon, n], i) => {
          const Tile = Icon === Chrome ? DockHighlight : DockTile;
          return (
            <DockItem key={i}>
              <Tile><Icon /></Tile>
              <Dots>{Array.from({ length: n }, (_, k) => <i key={k} />)}</Dots>
            </DockItem>
          );
        })}
        <AppsGrid>
          <svg width="32" height="32" viewBox="0 0 32 32" fill="#f2f2f2">
            {[0, 12, 24].flatMap((y) => [0, 12, 24].map((x) => <rect key={`${x}-${y}`} x={x + 1} y={y + 1} width="6" height="6" rx="1.500" />))}
          </svg>
        </AppsGrid>
      </Dock>
    </Screen>
  );
}
